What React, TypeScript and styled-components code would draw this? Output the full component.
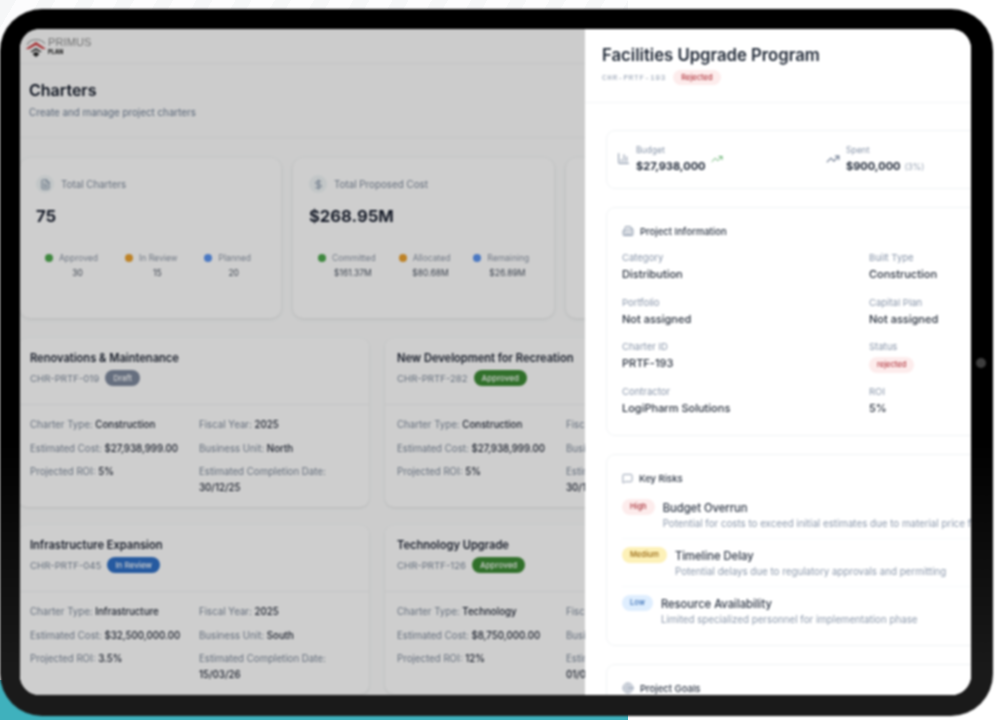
import React from "react";
import styled, { createGlobalStyle } from "styled-components";
import { BarChart3, Building2, DollarSign, FileText, MessageSquare, Target, TrendingUp } from "lucide-react";

const Global = createGlobalStyle`
  html, body { margin: 0; padding: 0; background: #fff; }
  body { font-family: Inter, "Liberation Sans", sans-serif; }
  * { box-sizing: border-box; }
`;

const Stage = styled.div`
  width: 1000px;
  height: 724px;
  overflow: hidden;
  padding-top: 9px;
  background:
    linear-gradient(#3fb1bd, #3fb1bd) 0 680px / 628px 40px no-repeat,
    repeating-linear-gradient(120deg, #f6f7f8 0 14px, #fcfcfd 14px 34px) 0 0 / 628px 40px no-repeat,
    #fff;
`;

const Device = styled.div`
  position: relative;
  width: 993px;
  height: 707px;
  padding: 20px 22px 21px 20px;
  border-radius: 42px;
  background: linear-gradient(#000 0, #000 60%, #1a1a1a 94%);
  filter: blur(0.9px);
`;

const Camera = styled.span`
  position: absolute;
  top: 349px;
  right: 7px;
  width: 10px;
  height: 10px;
  border-radius: 50%;
  background: #3d3d3d;
`;

const Screen = styled.div`
  display: flex;
  height: 100%;
  overflow: hidden;
  border-radius: 20px;
  background: #fff;
`;

const Main = styled.div`
  position: relative;
  flex: 0 0 565px;
  overflow: hidden;
  background: #fafbfb;
`;

const Dim = styled.div`
  position: absolute;
  inset: 0;
  background: rgba(0, 0, 0, 0.185);
`;

const TopBar = styled.div`
  display: flex;
  align-items: center;
  height: 35px;
  padding-left: 4px;
  border-bottom: 1px solid #f0f1f2;
`;

const LogoWords = styled.div`
  display: flex;
  flex-direction: column;
`;

const LogoName = styled.span`
  font-family: "Liberation Sans", sans-serif;
  font-size: 11px;
  line-height: 12px;
  letter-spacing: 0.1px;
  color: #8a8a8a;
`;

const LogoPlan = styled.span`
  font-size: 5.5px;
  line-height: 9px;
  font-weight: 800;
  color: #222;
`;

const PageHead = styled.div`
  height: 74px;
  padding: 16px 0 0 9px;
  border-bottom: 1px solid #f1f2f3;
`;

const PageTitle = styled.h1`
  margin: 0;
  font-size: 16px;
  line-height: 20px;
  font-weight: 600;
  color: #111827;
`;

const PageSub = styled.p`
  margin: 6px 0 0;
  font-size: 9.8px;
  line-height: 14px;
  color: #6b7a90;
`;

const StatRow = styled.div`
  display: flex;
  gap: 12px;
  margin-top: 20px;
`;

const StatCard = styled.div`
  flex: 0 0 261px;
  height: 160px;
  padding: 17px 16px 0;
  border-radius: 10px;
  background: #fdfdfd;
  box-shadow: 0 1px 4px rgba(0, 0, 0, 0.1);
`;

const StatHead = styled.div`
  display: flex;
  align-items: center;
  gap: 7px;
  font-size: 9.8px;
  color: #7b8798;
`;

const IconCircle = styled.span`
  display: inline-flex;
  align-items: center;
  justify-content: center;
  width: 18px;
  height: 18px;
  border-radius: 50%;
  background: #eef3f4;
  color: #7a8aa0;
`;

const StatValue = styled.div`
  margin-top: 12px;
  font-size: 16.6px;
  line-height: 22px;
  font-weight: 700;
  color: #1a2130;
`;

const Legend = styled.div<{ $gap: number }>`
  display: flex;
  gap: ${(p) => p.$gap}px;
  margin-top: 25px;
  padding-left: 9px;
`;

const LegendItem = styled.div`
  display: flex;
  flex-direction: column;
  align-items: center;
`;

const LegendLabel = styled.div`
  display: flex;
  align-items: center;
  gap: 6px;
  font-size: 8.5px;
  line-height: 12px;
  color: #8a94a3;
`;

const Dot = styled.span<{ $color: string }>`
  width: 8px;
  height: 8px;
  border-radius: 50%;
  background: ${(p) => p.$color};
`;

const LegendValue = styled.div`
  margin: 3px 0 0 12px;
  font-size: 8.5px;
  line-height: 12px;
  color: #4a5361;
`;

const CharterGrid = styled.div`
  display: grid;
  grid-template-columns: 351px 351px;
  gap: 18px 16px;
  margin: 20px 0 0 -2px;
`;

const CharterCard = styled.div`
  height: 169px;
  border-radius: 9px;
  background: #fdfdfd;
  box-shadow: 0 1px 3px rgba(0, 0, 0, 0.1);
`;

const CharterHead = styled.div`
  height: 67px;
  padding: 13px 12px 0;
  border-bottom: 1px solid #f0f1f2;
`;

const CharterTitle = styled.div`
  font-size: 11.1px;
  line-height: 14px;
  font-weight: 600;
  color: #1a2130;
`;

const CharterMeta = styled.div`
  display: flex;
  align-items: center;
  gap: 6px;
  height: 20px;
  margin-top: 3px;
  font-size: 9.6px;
  color: #7b8798;
`;

const Badge = styled.span<{ $color: string }>`
  height: 16px;
  padding: 0 8px;
  border-radius: 8px;
  background: ${(p) => p.$color};
  font-size: 8px;
  line-height: 16px;
  font-weight: 500;
  color: #fff;
`;

const CharterBody = styled.div`
  display: grid;
  grid-template-columns: 169px 1fr;
  row-gap: 9.5px;
  padding: 13px 12px 0;
`;

const Field = styled.div`
  font-size: 9.7px;
  line-height: 14px;
  color: #7b8798;
`;

const FieldValue = styled.span`
  font-weight: 500;
  color: #1a2130;
`;

const FieldBlock = styled.div`
  margin-top: 2px;
  font-weight: 500;
  color: #1a2130;
`;

const Drawer = styled.div`
  flex: 1;
  min-width: 0;
  overflow: hidden;
  background: #fff;
`;

const DrawerHead = styled.div`
  height: 74px;
  padding: 14px 0 0 17px;
  border-bottom: 1px solid #f4f5f7;
`;

const DrawerTitle = styled.h2`
  margin: 0;
  font-size: 16.7px;
  line-height: 24px;
  font-weight: 600;
  color: #1c2533;
  white-space: nowrap;
`;

const DrawerMeta = styled.div`
  display: flex;
  align-items: center;
  gap: 7px;
  margin-top: 3px;
`;

const MonoId = styled.span`
  font-family: "Liberation Mono", monospace;
  font-size: 7.5px;
  letter-spacing: 0.85px;
  color: #8c98ab;
`;

const SoftPill = styled.span<{ $bg: string; $fg: string; $h?: number }>`
  display: inline-block;
  flex: none;
  height: ${(p) => p.$h ?? 16}px;
  padding: 0 8px;
  border-radius: 8px;
  background: ${(p) => p.$bg};
  font-size: 7.5px;
  line-height: ${(p) => p.$h ?? 16}px;
  font-weight: 500;
  color: ${(p) => p.$fg};
`;

const DrawerBody = styled.div`
  display: flex;
  flex-direction: column;
  gap: 18px;
  width: 420px;
  padding: 27px 0 0 21px;
`;

const Panel = styled.section<{ $h: number }>`
  height: ${(p) => p.$h}px;
  padding: 16px 15px 0;
  border: 1px solid #f1f3f5;
  border-radius: 9px;
  background: #fff;
`;

const KpiPanel = styled.section`
  display: grid;
  grid-template-columns: 209px 1fr;
  align-items: center;
  height: 59px;
  padding: 0 0 2px 10px;
  border: 1px solid #f1f3f5;
  border-radius: 9px;
`;

const Kpi = styled.div`
  display: flex;
  align-items: center;
  gap: 6px;
`;

const KpiLabel = styled.div`
  font-size: 8.5px;
  line-height: 12px;
  color: #8794a8;
`;

const KpiValue = styled.div`
  margin-top: 3px;
  font-size: 11px;
  line-height: 14px;
  font-weight: 700;
  color: #202938;
`;

const KpiNote = styled.span`
  margin-left: 4px;
  font-size: 8.5px;
  font-weight: 400;
  color: #98a3b3;
`;

const PanelTitle = styled.div`
  display: flex;
  align-items: center;
  gap: 6px;
  height: 14px;
  font-size: 9.5px;
  font-weight: 500;
  color: #2a3342;
`;

const InfoGrid = styled.div`
  display: grid;
  grid-template-columns: 247px 1fr;
  row-gap: 15.7px;
  margin-top: 14px;
`;

const InfoLabel = styled.div`
  font-size: 9.5px;
  line-height: 12px;
  color: #8794a8;
`;

const InfoValue = styled.div`
  height: 14px;
  margin-top: 3px;
  font-size: 11px;
  line-height: 14px;
  font-weight: 500;
  color: #252d3a;
`;

const RiskList = styled.div`
  margin-top: 14px;
`;

const Risk = styled.div`
  display: flex;
  align-items: flex-start;
  gap: 8px;
  padding: 8px 0;
  border-bottom: 1px solid #f9fafb;
  white-space: nowrap;
  &:first-child { padding-top: 0; }
  &:last-child { border-bottom: 0; }
`;

const RiskTitle = styled.div`
  margin-top: 2px;
  font-size: 11.2px;
  line-height: 14px;
  font-weight: 500;
  color: #2a3342;
`;

const RiskText = styled.div`
  margin-top: 3px;
  font-size: 9.75px;
  line-height: 12px;
  color: #8a97aa;
`;

type Pair = [string, string];

const charters: { title: string; id: string; badge: string; color: string; rows: Pair[]; fy: string; unit: string; date: string }[] = [
  { title: "Renovations & Maintenance", id: "CHR-PRTF-019", badge: "Draft", color: "#7d889c", fy: "2025", unit: "North", date: "30/12/25", rows: [["Charter Type:", "Construction"], ["Estimated Cost:", "$27,938,999.00"], ["Projected ROI:", "5%"]] },
  { title: "New Development for Recreation", id: "CHR-PRTF-282", badge: "Approved", color: "#3d8a35", fy: "2025", unit: "East", date: "30/12/25", rows: [["Charter Type:", "Construction"], ["Estimated Cost:", "$27,938,999.00"], ["Projected ROI:", "5%"]] },
  { title: "Infrastructure Expansion", id: "CHR-PRTF-045", badge: "In Review", color: "#2f6fc4", fy: "2025", unit: "South", date: "15/03/26", rows: [["Charter Type:", "Infrastructure"], ["Estimated Cost:", "$32,500,000.00"], ["Projected ROI:", "3.5%"]] },
  { title: "Technology Upgrade", id: "CHR-PRTF-126", badge: "Approved", color: "#3d8a35", fy: "2025", unit: "West", date: "01/06/26", rows: [["Charter Type:", "Technology"], ["Estimated Cost:", "$8,750,000.00"], ["Projected ROI:", "12%"]] },
];

const info: Pair[] = [
  ["Category", "Distribution"], ["Built Type", "Construction"],
  ["Portfolio", "Not assigned"], ["Capital Plan", "Not assigned"],
  ["Charter ID", "PRTF-193"], ["Status", ""],
  ["Contractor", "LogiPharm Solutions"], ["ROI", "5%"],
];

const risks = [
  { level: "High", bg: "#fdecec", fg: "#a8323a", title: "Budget Overrun", text: "Potential for costs to exceed initial estimates due to material price fluctuations" },
  { level: "Medium", bg: "#fdf1b8", fg: "#96650f", title: "Timeline Delay", text: "Potential delays due to regulatory approvals and permitting" },
  { level: "Low", bg: "#dfeefe", fg: "#3a6fb5", title: "Resource Availability", text: "Limited specialized personnel for implementation phase" },
];

const Logo = () => (
  <svg width="24" height="24" viewBox="0 0 24 24" fill="none">
    <path d="M3 11 C6 4 17 4 21 10" stroke="#a9a9a9" strokeWidth="1.2" />
    <path d="M1.5 15 L12 8 L22 15 L18.5 15 L12 11 L5 15 Z" fill="#c8353a" />
    <path d="M6 18 L12 14 L18 18 L15.5 18 L12 16 L8.5 18 Z" fill="#222" />
    <path d="M8.5 20 L12 17.8 L15.5 20 L12 23 Z" fill="#222" />
  </svg>
);

const Stat = ({ icon, label, value, gap, items }: { icon: React.ReactNode; label: string; value: string; gap: number; items: [string, string, string][] }) => (
  <StatCard>
    <StatHead><IconCircle>{icon}</IconCircle>{label}</StatHead>
    <StatValue>{value}</StatValue>
    <Legend $gap={gap}>
      {items.map(([c, l, v]) => (
        <LegendItem key={l}>
          <LegendLabel><Dot $color={c} />{l}</LegendLabel>
          <LegendValue>{v}</LegendValue>
        </LegendItem>
      ))}
    </Legend>
  </StatCard>
);

export default function App() {
  return (
    <Stage>
      <Global />
      <Device>
        <Camera />
        <Screen>
          <Main>
            <TopBar>
              <Logo />
              <LogoWords>
                <LogoName>PRIMUS</LogoName>
                <LogoPlan>PLAN</LogoPlan>
              </LogoWords>
            </TopBar>
            <PageHead>
              <PageTitle>Charters</PageTitle>
              <PageSub>Create and manage project charters</PageSub>
            </PageHead>
            <StatRow>
              <Stat
                icon={<FileText size={11} />}
                label="Total Charters"
                value="75"
                gap={27}
                items={[["#4ca64c", "Approved", "30"], ["#e8a030", "In Review", "15"], ["#5b93ee", "Planned", "20"]]}
              />
              <Stat
                icon={<DollarSign size={11} />}
                label="Total Proposed Cost"
                value="$268.95M"
                gap={23}
                items={[["#4ca64c", "Committed", "$161.37M"], ["#e8a030", "Allocated", "$80.68M"], ["#5b93ee", "Remaining", "$26.89M"]]}
              />
              <StatCard />
            </StatRow>
            <CharterGrid>
              {charters.map((c) => (
                <CharterCard key={c.id}>
                  <CharterHead>
                    <CharterTitle>{c.title}</CharterTitle>
                    <CharterMeta>{c.id}<Badge $color={c.color}>{c.badge}</Badge></CharterMeta>
                  </CharterHead>
                  <CharterBody>
                    <Field>{c.rows[0][0]} <FieldValue>{c.rows[0][1]}</FieldValue></Field>
                    <Field>Fiscal Year: <FieldValue>{c.fy}</FieldValue></Field>
                    <Field>{c.rows[1][0]} <FieldValue>{c.rows[1][1]}</FieldValue></Field>
                    <Field>Business Unit: <FieldValue>{c.unit}</FieldValue></Field>
                    <Field>{c.rows[2][0]} <FieldValue>{c.rows[2][1]}</FieldValue></Field>
                    <Field>Estimated Completion Date:<FieldBlock>{c.date}</FieldBlock></Field>
                  </CharterBody>
                </CharterCard>
              ))}
            </CharterGrid>
            <Dim />
          </Main>
          <Drawer>
            <DrawerHead>
              <DrawerTitle>Facilities Upgrade Program</DrawerTitle>
              <DrawerMeta>
                <MonoId>CHR-PRTF-193</MonoId>
                <SoftPill $bg="#fdecec" $fg="#b23a42" $h={15}>Rejected</SoftPill>
              </DrawerMeta>
            </DrawerHead>
            <DrawerBody>
              <KpiPanel>
                <Kpi>
                  <BarChart3 size={13} color="#8c98ab" />
                  <div>
                    <KpiLabel>Budget</KpiLabel>
                    <KpiValue>$27,938,000</KpiValue>
                  </div>
                  <TrendingUp size={12} color="#5fae6a" />
                </Kpi>
                <Kpi>
                  <TrendingUp size={14} color="#6d7a90" />
                  <div>
                    <KpiLabel>Spent</KpiLabel>
                    <KpiValue>$900,000<KpiNote>(3%)</KpiNote></KpiValue>
                  </div>
                </Kpi>
              </KpiPanel>
              <Panel $h={229}>
                <PanelTitle><Building2 size={12} color="#8c98ab" />Project Information</PanelTitle>
                <InfoGrid>
                  {info.map(([l, v]) => (
                    <div key={l}>
                      <InfoLabel>{l}</InfoLabel>
                      <InfoValue>{v || <SoftPill $bg="#fdecec" $fg="#b23a42">rejected</SoftPill>}</InfoValue>
                    </div>
                  ))}
                </InfoGrid>
              </Panel>
              <Panel $h={192}>
                <PanelTitle><MessageSquare size={11} color="#8c98ab" />Key Risks</PanelTitle>
                <RiskList>
                  {risks.map((r) => (
                    <Risk key={r.level}>
                      <SoftPill $bg={r.bg} $fg={r.fg}>{r.level}</SoftPill>
                      <div>
                        <RiskTitle>{r.title}</RiskTitle>
                        <RiskText>{r.text}</RiskText>
                      </div>
                    </Risk>
                  ))}
                </RiskList>
              </Panel>
              <Panel $h={120}>
                <PanelTitle><Target size={12} color="#8c98ab" />Project Goals</PanelTitle>
              </Panel>
            </DrawerBody>
          </Drawer>
        </Screen>
      </Device>
    </Stage>
  );
}
